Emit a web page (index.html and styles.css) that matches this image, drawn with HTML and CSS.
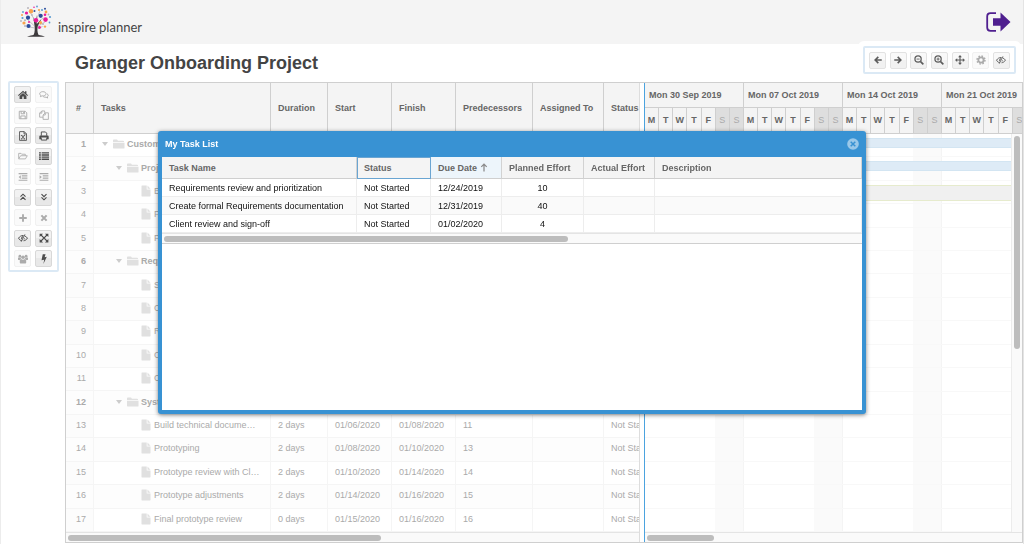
FILE: index.html
```html
<!DOCTYPE html>
<html lang="en">
<head>
<meta charset="utf-8">
<title>Granger Onboarding Project</title>
<link rel="stylesheet" href="styles.css">
</head>
<body>
<svg class="sprite" aria-hidden="true">
  <symbol id="left" viewBox="0 0 16 16"><path d="M14 8H4M8.500 3L3.500 8l5 5" fill="none" stroke="currentColor" stroke-width="2.600"/></symbol>
  <symbol id="right" viewBox="0 0 16 16"><path d="M2 8h10M7.500 3l5 5-5 5" fill="none" stroke="currentColor" stroke-width="2.600"/></symbol>
  <symbol id="zoomout" viewBox="0 0 16 16"><path d="M10.500 10.500L15 15" stroke="currentColor" stroke-width="2.600"/><circle cx="6.500" cy="6.500" r="5" fill="none" stroke="currentColor" stroke-width="2"/><path d="M4 6.500h5" stroke="currentColor" stroke-width="1.400"/></symbol>
  <symbol id="zoomin" viewBox="0 0 16 16"><path d="M10.500 10.500L15 15" stroke="currentColor" stroke-width="2.600"/><circle cx="6.500" cy="6.500" r="5" fill="none" stroke="currentColor" stroke-width="2"/><path d="M4 6.500h5M6.500 4v5" stroke="currentColor" stroke-width="1.400"/></symbol>
  <symbol id="move" viewBox="0 0 16 16"><path d="M8 2v12M2 8h12" stroke="currentColor" stroke-width="1.800"/><path d="M8 0l3 3.500H5zM8 16l3-3.500H5zM0 8l3.500-3v6zM16 8l-3.500-3v6z" fill="currentColor"/></symbol>
  <symbol id="gear" viewBox="0 0 16 16"><circle cx="8" cy="8" r="4.200" fill="none" stroke="currentColor" stroke-width="3"/><circle cx="8" cy="8" r="6.300" fill="none" stroke="currentColor" stroke-width="2.400" stroke-dasharray="2.500 2.450"/></symbol>
  <symbol id="eyeoff" viewBox="0 0 18 16"><path d="M7 13C4 12.500 2 10.500 1 8.300 3 5 6 3.500 9 3.500h1M12 4.200c2.300.9 4 2.400 5 4.100-1.600 2.700-4 4.400-7 4.700" fill="none" stroke="currentColor" stroke-width="1.700"/><path d="M9 5a3.400 3.400 0 0 0-2.600 5.600L9.500 5zM12.400 7a3.600 3.600 0 0 1-2.600 4.400z" fill="currentColor"/><path d="M12.500 1.500L5.800 14.500" stroke="currentColor" stroke-width="1.600"/></symbol>
  <symbol id="home" viewBox="0 0 16 16"><path d="M8 1.200L0 8.300l1.200 1.300L8 3.700l6.800 5.900L16 8.300l-2.500-2.400V2h-2.300v1.900z" fill="currentColor"/><path d="M8 4.700L2.500 9.500v5h4.300v-4h2.400v4h4.300v-5z" fill="currentColor"/></symbol>
  <symbol id="chat" viewBox="0 0 18 16"><path d="M7 2C3.500 2 1.200 3.700 1.200 5.800c0 1.300.8 2.400 2 3.100L2.500 11l2.900-1.400c4.100.6 7.300-1.200 7.300-3.800C12.700 3.600 10.300 2 7 2z" fill="none" stroke="currentColor" stroke-width="1.600"/><path d="M14.300 5.800c3 1.400 3 4.300.6 5.600l.8 2.100-3-1.500c-2.300.3-4.200-.2-5.300-1.200" fill="none" stroke="currentColor" stroke-width="1.600"/></symbol>
  <symbol id="save" viewBox="0 0 16 16"><path d="M2 2h9.500L14 4.500V14H2zM5 2v4h5.500V2M4.500 14V9.500h7V14" fill="none" stroke="currentColor" stroke-width="1.500"/><path d="M8.300 3h1.300v2H8.300z" fill="currentColor"/></symbol>
  <symbol id="copy" viewBox="0 0 16 16"><path d="M6.500 11.500H1V5l3.500-3.500H9v3M4.500 1.500V5H1M10 4.500h5V15H6.500V8zM10 4.500V8H6.500" fill="none" stroke="currentColor" stroke-width="1.400"/></symbol>
  <symbol id="excel" viewBox="0 0 16 16"><path d="M2.500 1H10l3.500 3.500V15h-11zM9.700 1v3.800h3.800" fill="none" stroke="currentColor" stroke-width="1.400"/><path d="M5.500 7l5 5.800M10.500 7l-5 5.800M4.700 7h2.600M8.900 7h2.400M4.700 12.800H7M8.900 12.800h2.400" fill="none" stroke="currentColor" stroke-width="1.300"/></symbol>
  <symbol id="print" viewBox="0 0 16 16"><path d="M3.700 7.500v-6h6.600l2 2v4" fill="none" stroke="currentColor" stroke-width="1.500"/><path d="M2.500 7h11c1.200 0 2 .8 2 2v4h-2.700v-2.500H3.200V13H.5V9c0-1.200.8-2 2-2z" fill="currentColor"/><path d="M3.700 10.500v4h8.600v-4" fill="none" stroke="currentColor" stroke-width="1.500"/></symbol>
  <symbol id="open" viewBox="0 0 18 16"><path d="M1.200 12.500V3.300h4.300l1.200 1.500h6.500v2.500M1.200 13.200l3.500-5.700h12l-3.300 5.700z" fill="none" stroke="currentColor" stroke-width="1.500"/></symbol>
  <symbol id="list" viewBox="0 0 16 16"><path d="M0 3h3M0 6.400h3M0 9.800h3M0 13.200h3M4.200 3H16M4.200 6.400H16M4.200 9.800H16M4.200 13.200H16" stroke="currentColor" stroke-width="2.200"/></symbol>
  <symbol id="outdent" viewBox="0 0 16 16"><path d="M1 2.700h14M6 6.200h9M6 9.700h9M1 13.200h14" stroke="currentColor" stroke-width="1.900"/><path d="M4.500 5v6L1 8z" fill="currentColor"/></symbol>
  <symbol id="indent" viewBox="0 0 16 16"><path d="M1 2.700h14M6 6.200h9M6 9.700h9M1 13.200h14" stroke="currentColor" stroke-width="1.900"/><path d="M1 5v6l3.500-3z" fill="currentColor"/></symbol>
  <symbol id="up2" viewBox="0 0 16 16"><path d="M4 7.500l4-4 4 4M4 12.500l4-4 4 4" fill="none" stroke="currentColor" stroke-width="1.800"/></symbol>
  <symbol id="down2" viewBox="0 0 16 16"><path d="M4 3.500l4 4 4-4M4 8.500l4 4 4-4" fill="none" stroke="currentColor" stroke-width="1.800"/></symbol>
  <symbol id="plus" viewBox="0 0 16 16"><path d="M8 2v12M2 8h12" stroke="currentColor" stroke-width="3"/></symbol>
  <symbol id="cross" viewBox="0 0 16 16"><path d="M3.800 3.800l8.400 8.400M12.200 3.800l-8.400 8.400" stroke="currentColor" stroke-width="3.300"/></symbol>
  <symbol id="expand" viewBox="0 0 16 16"><path d="M3 3l10 10M13 3L3 13" stroke="currentColor" stroke-width="2.200"/><path d="M1 1h5.500L1 6.500zM15 1v5.500L9.500 1zM1 15V9.500L6.500 15zM15 15H9.500L15 9.500z" fill="currentColor"/></symbol>
  <symbol id="team" viewBox="1 1 16 14"><circle cx="4" cy="3.500" r="2.200" fill="currentColor"/><circle cx="14" cy="3.500" r="2.200" fill="currentColor"/><circle cx="9" cy="5.200" r="2.900" fill="currentColor"/><path d="M.8 9V7c0-1 .6-1.500 1.500-1.500h3c0 1.300.5 2.300 1.300 3H5L3.500 10zM17.200 9V7c0-1-.6-1.500-1.500-1.500h-3c0 1.300-.5 2.300-1.300 3H13l1.500 1.500zM3.800 13c0-2.700.8-4.400 2.500-4.600 1.700 1 3.700 1 5.400 0 1.700.2 2.500 1.900 2.500 4.600 0 1.400-.8 2-1.900 2H5.700c-1.100 0-1.900-.6-1.900-2z" fill="currentColor"/></symbol>
  <symbol id="bolt" viewBox="0 0 16 16"><path d="M6 .5h4.500L9 5l3.500-.8L7 16l1.300-7-4.300 1z" fill="currentColor"/></symbol>
  <symbol id="folder" viewBox="0 0 12 10"><path d="M0 1.500C0 .8.300.5 1 .5h3l1 1.200h5c.7 0 1 .3 1 .9V3H0zM0 3.700h11.500V9c0 .4-.2.500-.5.500H.7C.2 9.500 0 9.300 0 9z" fill="currentColor"/></symbol>
  <symbol id="doc" viewBox="0 0 10 12"><path d="M.5 1c0-.3.200-.5.500-.5h4.700v4h3.800V11c0 .3-.2.500-.5.500H1c-.3 0-.5-.2-.5-.5zM6.500.5l3 3.200h-3z" fill="currentColor"/></symbol>
</svg>

<header class="topbar">
  <svg class="logo" viewBox="0 0 34 34" aria-hidden="true">
    <path d="M8 31.700c3-1.200 5-1.300 6.700-2 1.200-2.500 1.200-6 .8-9L14.300 12l2.100 5.500.9-7.500.5 9 5-5.500-4 7.500c-.6 3-.6 6 .6 8.700 2 .7 4 .8 6.600 2z" fill="#3d3a3c"/>
    <path d="M15.500 21L8 14M15.800 23l-8-1.500M19 21l7-4M18.500 24l5-2.500M15 14l-4-7M18 13l3-7" stroke="#a29ea6" stroke-width=".6" fill="none"/>
    <g fill="#f9a34b"><circle cx="12" cy="6.200" r="2.200"/><circle cx="27" cy="7" r="1.400"/><circle cx="5" cy="18" r="1.600"/><circle cx="21.500" cy="17.600" r="1.600"/><circle cx="20" cy="5" r="1.100"/><circle cx="26" cy="21.600" r="1.200"/><circle cx="3" cy="10" r="1"/></g>
    <g fill="#ec1a9a"><circle cx="17" cy="15.300" r="2.300"/><circle cx="26.500" cy="14.600" r="2.300"/><circle cx="7.500" cy="8" r="1.600"/><circle cx="20.500" cy="22.500" r="1.400"/><circle cx="26" cy="9.700" r="1.300"/><circle cx="15" cy="2.200" r=".8"/><circle cx="10" cy="17" r="1"/></g>
    <g fill="#2c4d9b"><circle cx="21.700" cy="10.800" r="2.100"/><circle cx="9" cy="12.700" r="2.100"/><circle cx="9.500" cy="21" r="2.100"/><circle cx="15.500" cy="6" r="1"/><circle cx="26" cy="3.800" r="1"/></g>
    <g fill="#5b9bd0"><circle cx="3.500" cy="13" r="1.100"/><circle cx="31" cy="12" r="1.100"/><circle cx="18" cy="1.500" r=".9"/><circle cx="23" cy="5" r="1"/><circle cx="30.500" cy="17.500" r=".9"/><circle cx="4" cy="7" r=".9"/></g>
    <g fill="#b8b4bd"><circle cx="6" cy="15.300" r="1"/><circle cx="9" cy="3" r="1"/><circle cx="29.500" cy="9.500" r=".9"/><circle cx="2" cy="16" r=".9"/><circle cx="24" cy="19" r="1"/><circle cx="13" cy="10" r=".9"/><circle cx="6" cy="21" r="1"/><circle cx="24" cy="13.500" r=".8"/></g>
  </svg>
  <span class="brand">inspire planner</span>
  <button class="logout" aria-label="Log out"><svg viewBox="0 0 25 20"><path d="M10 1.200H4.500C2.500 1.200 1.200 2.500 1.200 4.500v11c0 2 1.300 3.300 3.300 3.300H10" fill="none" stroke="#4f1f8f" stroke-width="1.800"/><path d="M7 6.200h7.500V.5L24.500 10l-10 9.500v-5.700H7z" fill="#4f1f8f"/></svg></button>
</header>

<div class="titlebar">
  <h1>Granger Onboarding Project</h1>
  <div class="viewtools">
    <button class="tool" aria-label="Previous"><svg><use href="#left"/></svg></button>
    <button class="tool" aria-label="Next"><svg><use href="#right"/></svg></button>
    <button class="tool" aria-label="Zoom out"><svg><use href="#zoomout"/></svg></button>
    <button class="tool" aria-label="Zoom in"><svg><use href="#zoomin"/></svg></button>
    <button class="tool" aria-label="Fit"><svg><use href="#move"/></svg></button>
    <button class="tool" disabled aria-label="Settings"><svg><use href="#gear"/></svg></button>
    <button class="tool" aria-label="Hide"><svg><use href="#eyeoff"/></svg></button>
  </div>
</div>

<main class="workspace">
  <aside class="sidetools">
    <button class="tool dark" aria-label="Home"><svg><use href="#home"/></svg></button>
    <button class="tool" disabled aria-label="Comments"><svg><use href="#chat"/></svg></button>
    <button class="tool" disabled aria-label="Save"><svg><use href="#save"/></svg></button>
    <button class="tool" disabled aria-label="Copy"><svg><use href="#copy"/></svg></button>
    <button class="tool dark" aria-label="Export to Excel"><svg><use href="#excel"/></svg></button>
    <button class="tool dark" aria-label="Print"><svg><use href="#print"/></svg></button>
    <button class="tool" disabled aria-label="Open"><svg><use href="#open"/></svg></button>
    <button class="tool dark" aria-label="Task list"><svg><use href="#list"/></svg></button>
    <button class="tool" disabled aria-label="Outdent"><svg><use href="#outdent"/></svg></button>
    <button class="tool" disabled aria-label="Indent"><svg><use href="#indent"/></svg></button>
    <button class="tool dark" aria-label="Collapse all"><svg><use href="#up2"/></svg></button>
    <button class="tool dark" aria-label="Expand all"><svg><use href="#down2"/></svg></button>
    <button class="tool" disabled aria-label="Add"><svg><use href="#plus"/></svg></button>
    <button class="tool" disabled aria-label="Delete"><svg><use href="#cross"/></svg></button>
    <button class="tool dark" aria-label="Hide columns"><svg><use href="#eyeoff"/></svg></button>
    <button class="tool dark" aria-label="Full screen"><svg><use href="#expand"/></svg></button>
    <button class="tool" disabled aria-label="Team"><svg><use href="#team"/></svg></button>
    <button class="tool dark" aria-label="Quick actions"><svg><use href="#bolt"/></svg></button>
  </aside>

  <div class="planner">
    <section class="pane">
      <div class="pane-view">
        <table class="tasks">
          <colgroup><col class="c-num"><col class="c-task"><col class="c-dur"><col class="c-date"><col class="c-date"><col class="c-pred"><col class="c-assigned"><col class="c-status"></colgroup>
          <thead><tr><th>#</th><th>Tasks</th><th>Duration</th><th>Start</th><th>Finish</th><th>Predecessors</th><th>Assigned To</th><th>Status</th></tr></thead>
          <tbody>
            <tr class="parent"><td>1</td><td><div class="name"><i class="caret"></i><svg class="folder"><use href="#folder"/></svg><span>Customer</span></div></td><td></td><td></td><td></td><td></td><td></td><td></td></tr>
            <tr class="parent"><td>2</td><td><div class="name lvl2"><i class="caret"></i><svg class="folder"><use href="#folder"/></svg><span>Project</span></div></td><td></td><td></td><td></td><td></td><td></td><td></td></tr>
            <tr><td>3</td><td><div class="name leaf"><svg class="doc"><use href="#doc"/></svg><span>E</span></div></td><td></td><td></td><td></td><td></td><td></td><td></td></tr>
            <tr><td>4</td><td><div class="name leaf"><svg class="doc"><use href="#doc"/></svg><span>F</span></div></td><td></td><td></td><td></td><td></td><td></td><td></td></tr>
            <tr><td>5</td><td><div class="name leaf"><svg class="doc"><use href="#doc"/></svg><span>F</span></div></td><td></td><td></td><td></td><td></td><td></td><td></td></tr>
            <tr class="parent"><td>6</td><td><div class="name lvl2"><i class="caret"></i><svg class="folder"><use href="#folder"/></svg><span>Requirements</span></div></td><td></td><td></td><td></td><td></td><td></td><td></td></tr>
            <tr><td>7</td><td><div class="name leaf"><svg class="doc"><use href="#doc"/></svg><span>S</span></div></td><td></td><td></td><td></td><td></td><td></td><td></td></tr>
            <tr><td>8</td><td><div class="name leaf"><svg class="doc"><use href="#doc"/></svg><span>C</span></div></td><td></td><td></td><td></td><td></td><td></td><td></td></tr>
            <tr><td>9</td><td><div class="name leaf"><svg class="doc"><use href="#doc"/></svg><span>R</span></div></td><td></td><td></td><td></td><td></td><td></td><td></td></tr>
            <tr><td>10</td><td><div class="name leaf"><svg class="doc"><use href="#doc"/></svg><span>C</span></div></td><td></td><td></td><td></td><td></td><td></td><td></td></tr>
            <tr><td>11</td><td><div class="name leaf"><svg class="doc"><use href="#doc"/></svg><span>C</span></div></td><td></td><td></td><td></td><td></td><td></td><td></td></tr>
            <tr class="parent"><td>12</td><td><div class="name lvl2"><i class="caret"></i><svg class="folder"><use href="#folder"/></svg><span>System</span></div></td><td></td><td></td><td></td><td></td><td></td><td></td></tr>
            <tr><td>13</td><td><div class="name leaf"><svg class="doc"><use href="#doc"/></svg><span>Build technical docume…</span></div></td><td>2 days</td><td>01/06/2020</td><td>01/08/2020</td><td>11</td><td></td><td>Not Started</td></tr>
            <tr><td>14</td><td><div class="name leaf"><svg class="doc"><use href="#doc"/></svg><span>Prototyping</span></div></td><td>2 days</td><td>01/08/2020</td><td>01/10/2020</td><td>13</td><td></td><td>Not Started</td></tr>
            <tr><td>15</td><td><div class="name leaf"><svg class="doc"><use href="#doc"/></svg><span>Prototype review with Cl…</span></div></td><td>2 days</td><td>01/10/2020</td><td>01/14/2020</td><td>14</td><td></td><td>Not Started</td></tr>
            <tr><td>16</td><td><div class="name leaf"><svg class="doc"><use href="#doc"/></svg><span>Prototype adjustments</span></div></td><td>2 days</td><td>01/14/2020</td><td>01/16/2020</td><td>15</td><td></td><td>Not Started</td></tr>
            <tr><td>17</td><td><div class="name leaf"><svg class="doc"><use href="#doc"/></svg><span>Final prototype review</span></div></td><td>0 days</td><td>01/15/2020</td><td>01/16/2020</td><td>16</td><td></td><td>Not Started</td></tr>
          </tbody>
        </table>
      </div>
      <div class="hbar"><div class="thumb" style="width:55%"></div></div>
    </section>

    <section class="pane timeline">
      <div class="weeks">
        <div class="week"><b>Mon 30 Sep 2019</b><span>M</span><span>T</span><span>W</span><span>T</span><span>F</span><span class="off">S</span><span class="off">S</span></div>
        <div class="week"><b>Mon 07 Oct 2019</b><span>M</span><span>T</span><span>W</span><span>T</span><span>F</span><span class="off">S</span><span class="off">S</span></div>
        <div class="week"><b>Mon 14 Oct 2019</b><span>M</span><span>T</span><span>W</span><span>T</span><span>F</span><span class="off">S</span><span class="off">S</span></div>
        <div class="week"><b>Mon 21 Oct 2019</b><span>M</span><span>T</span><span>W</span><span>T</span><span>F</span><span class="off">S</span><span class="off">S</span></div>
      </div>
      <div class="chart">
        <div class="lanes">
          <div><div class="bar"></div></div><div><div class="bar"></div></div><div><div class="bar group"></div></div><div></div><div></div><div></div><div></div><div></div><div></div><div></div><div></div><div></div><div></div><div></div><div></div><div></div><div></div>
        </div>
        <div class="vbar"><div class="thumb" style="height:54%"></div></div>
      </div>
      <div class="hbar"><div class="thumb" style="width:18%"></div></div>
    </section>
  </div>
</main>

<div class="dialog" role="dialog" aria-labelledby="dlg">
  <div class="dialog-head">
    <h2 id="dlg">My Task List</h2>
    <button class="close" aria-label="Close"><svg viewBox="0 0 12 12"><circle cx="6" cy="6" r="5.800" fill="#9ac8e9"/><path d="M3.700 3.700l4.600 4.600M8.300 3.700L3.700 8.300" stroke="#3892d3" stroke-width="1.500"/></svg></button>
  </div>
  <div class="dialog-body">
    <table class="mine">
      <colgroup><col class="m-name"><col class="m-status"><col class="m-due"><col class="m-plan"><col class="m-act"><col></colgroup>
      <thead><tr><th>Task Name</th><th class="focus">Status</th><th class="sorted">Due Date <svg class="sort" viewBox="0 0 8 10"><path d="M4 9.500V1.500M1 4.300L4 1.300l3 3" fill="none" stroke="#8a8a8a" stroke-width="1.400"/></svg></th><th>Planned Effort</th><th>Actual Effort</th><th>Description</th></tr></thead>
      <tbody>
        <tr><td>Requirements review and prioritization</td><td>Not Started</td><td>12/24/2019</td><td>10</td><td></td><td></td></tr>
        <tr><td>Create formal Requirements documentation</td><td>Not Started</td><td>12/31/2019</td><td>40</td><td></td><td></td></tr>
        <tr><td>Client review and sign-off</td><td>Not Started</td><td>01/02/2020</td><td>4</td><td></td><td></td></tr>
      </tbody>
    </table>
    <div class="hbar"><div class="thumb" style="width:58%"></div></div>
  </div>
</div>
</body>
</html>
```

FILE: styles.css
```css
* { box-sizing: border-box; }

body {
  margin: 0;
  height: 100vh;
  display: flex;
  flex-direction: column;
  background: #fff;
  border-left: 1px solid #ececec;
  border-right: 1px solid #e4e4e4;
  font-family: "Liberation Sans", Arial, sans-serif;
  font-size: 9px;
  color: #666;
  overflow: hidden;
}

.sprite { display: none; }

button { padding: 0; border: 0; background: none; font: inherit; }

/* top bar */
.topbar {
  flex: none;
  display: flex;
  align-items: center;
  height: 44px;
  padding: 0 12px 0 18px;
  background: #f4f4f4;
}
.logo { width: 34px; height: 34px; }
.brand {
  margin: 10px 0 0 5px;
  font-family: Lato, sans-serif;
  font-size: 13px;
  color: #444;
}
.logout { margin-left: auto; width: 25px; height: 20px; }
.logout svg { display: block; width: 25px; height: 20px; }

/* title */
.titlebar {
  flex: none;
  display: flex;
  align-items: flex-start;
  justify-content: space-between;
  height: 37px;
  padding: 2px 7px 0 74px;
}
h1 { margin: 6px 0 0; font-size: 18px; line-height: 22px; color: #444; }

.viewtools {
  display: flex;
  align-items: center;
  justify-content: space-between;
  width: 153px;
  height: 28px;
  padding: 0 4px;
  border: 2px solid #dbe9f5;
  border-radius: 2px;
  background: #fff;
  box-shadow: 0 0 0 5px #fff;
}

.tool {
  display: flex;
  align-items: center;
  justify-content: center;
  width: 17px;
  height: 17px;
  border: 1px solid #e2e2e2;
  border-radius: 2px;
  background: linear-gradient(#f9f9f9 50%, #f1f1f1 50%);
  color: #5c5c5c;
}
.tool.dark { border-color: #d8d8d8; background: linear-gradient(#f2f2f2 50%, #e8e8e8 50%); color: #4c4c4c; }
.tool:disabled { border-color: #f1f1f1; background: #fafafa; color: #ababab; }
.tool svg { width: 10px; height: 10px; }

/* workspace */
.workspace {
  flex: 1;
  min-height: 0;
  display: flex;
  align-items: flex-start;
  padding: 0 0 1px 7px;
}
.sidetools {
  display: grid;
  grid-template-columns: 17px 17px;
  justify-content: space-between;
  align-content: space-between;
  width: 51px;
  height: 191px;
  margin-right: 6px;
  padding: 3px 5px 3px 4px;
  border: 2px solid #dbe9f5;
  border-radius: 2px;
}

.planner {
  flex: 1;
  min-width: 0;
  align-self: stretch;
  display: grid;
  grid-template-columns: 574fr 378fr;
  column-gap: 4px;
  margin-top: 1px;
  border: 1px solid #cfcfcf;
}
.pane { min-width: 0; min-height: 0; display: flex; flex-direction: column; }
.pane:first-child { border-right: 1px solid #ddd; }
.pane-view { flex: 1; min-height: 0; overflow: hidden; }

/* task grid */
table { border-collapse: separate; border-spacing: 0; table-layout: fixed; }
th, td { padding: 0 0 0 7px; text-align: left; white-space: nowrap; }

.tasks { width: 635px; height: 100%; color: #aaa; }
.c-num { width: 28px; }
.c-task { width: 177px; }
.c-dur { width: 57px; }
.c-date { width: 64px; }
.c-pred { width: 77px; }
.c-assigned { width: 71px; }
.c-status { width: 97px; }
.tasks th {
  height: 51px;
  border-right: 1px solid #cfcfcf;
  border-bottom: 1px solid #cfcfcf;
  background: #f4f4f4;
  color: #666;
}
.tasks th:first-child { padding-left: 10px; }
.tasks td { padding-bottom: 2px; border-right: 1px solid #f5f5f5; border-bottom: 1px solid #f5f5f5; }
.tasks td:first-child { padding: 0 7px 2px 0; text-align: right; background: #fcfcfc; }
.tasks tr:nth-child(even) td { background: #fdfdfd; }
.parent { font-weight: bold; }

.name { display: flex; align-items: center; height: 12px; }
.name.lvl2 { padding-left: 14px; }
.name.leaf { padding-left: 40px; }
.caret {
  margin: 0 5px 0 1px;
  border: 3px solid transparent;
  border-top: 4px solid #ccc;
  border-bottom: 0;
}
.folder { width: 12px; height: 10px; margin-right: 2px; color: #e0e0e0; }
.doc { width: 10px; height: 12px; margin-right: 3px; color: #e0e0e0; }

/* scrollbars */
.hbar { flex: none; height: 10px; padding: 2px; border-top: 1px solid #e4e4e4; background: #fafafa; }
.hbar .thumb { height: 6px; }
.thumb { border-radius: 3px; background: #bdbdbd; }
.vbar { width: 11px; padding: 2px; border-left: 1px solid #ececec; background: #fafafa; }
.vbar .thumb { width: 6px; }

/* timeline */
.timeline { border-left: 1px solid #4ba3df; }
.weeks { flex: none; display: flex; height: 51px; overflow: hidden; border-bottom: 1px solid #cfcfcf; background: #f4f4f4; }
.week {
  flex: none;
  width: 99px;
  display: grid;
  grid-template-columns: repeat(7, 1fr);
  grid-template-rows: 25px 25px;
}
.week b {
  grid-column: 1 / -1;
  padding-left: 4px;
  line-height: 25px;
  white-space: nowrap;
  border-right: 1px solid #cfcfcf;
  border-bottom: 1px solid #cfcfcf;
}
.week span { border-right: 1px solid #cfcfcf; line-height: 25px; text-align: center; font-weight: bold; }
.week .off { background: #dedede; color: #aaa; font-weight: normal; }

.chart { flex: 1; min-height: 0; display: flex; }
.lanes {
  flex: 1;
  display: grid;
  grid-auto-rows: 1fr;
  background: repeating-linear-gradient(90deg, transparent 0 70px, #fafafa 70px 98px, #f4f4f4 98px 99px);
}
.lanes > div { padding-top: 4px; border-bottom: 1px solid #f8f8f8; }
.bar { height: 10px; margin-left: 71px; border: 1px solid #d3e5f2; border-right: 0; background: #deebf6; }
.bar.group { height: 16px; border-color: #e6ebcd; background: #f0f0f0; }

/* dialog */
.dialog {
  position: fixed;
  inset: 131px 158px 130px;
  display: flex;
  flex-direction: column;
  padding: 0 4px 4px;
  border-radius: 3px;
  background: #3892d3;
  box-shadow: 0 1px 4px rgba(0, 0, 0, .5);
}
.dialog-head { flex: none; display: flex; align-items: center; justify-content: space-between; height: 26px; padding: 0 3px; color: #fff; }
h2 { margin: 0; font-size: 9px; }
.close, .close svg { display: block; width: 12px; height: 12px; }
.dialog-body { flex: 1; background: #fff; overflow: hidden; }
.dialog-body .hbar { height: 11px; border-bottom: 1px solid #cfcfcf; }

.mine { width: 100%; color: #111; }
.m-name { width: 195px; }
.m-status { width: 74px; }
.m-due { width: 71px; }
.m-plan { width: 82px; }
.m-act { width: 71px; }
.mine th {
  height: 22px;
  border-right: 1px solid #d2d2d2;
  border-bottom: 1px solid #cfcfcf;
  background: #f4f4f4;
  color: #666;
}
.mine th.focus { padding-left: 6px; border: 1px solid #6aa5d2; }
.mine th.sorted { background: #edf5fb; }
.sort { width: 8px; height: 9px; vertical-align: -1px; }
.mine td { height: 18px; border-right: 1px solid #ededed; border-bottom: 1px solid #ededed; }
.mine tr:nth-child(even) td { background: #fafafa; }
.mine td:nth-child(4) { padding: 0; text-align: center; }
```
